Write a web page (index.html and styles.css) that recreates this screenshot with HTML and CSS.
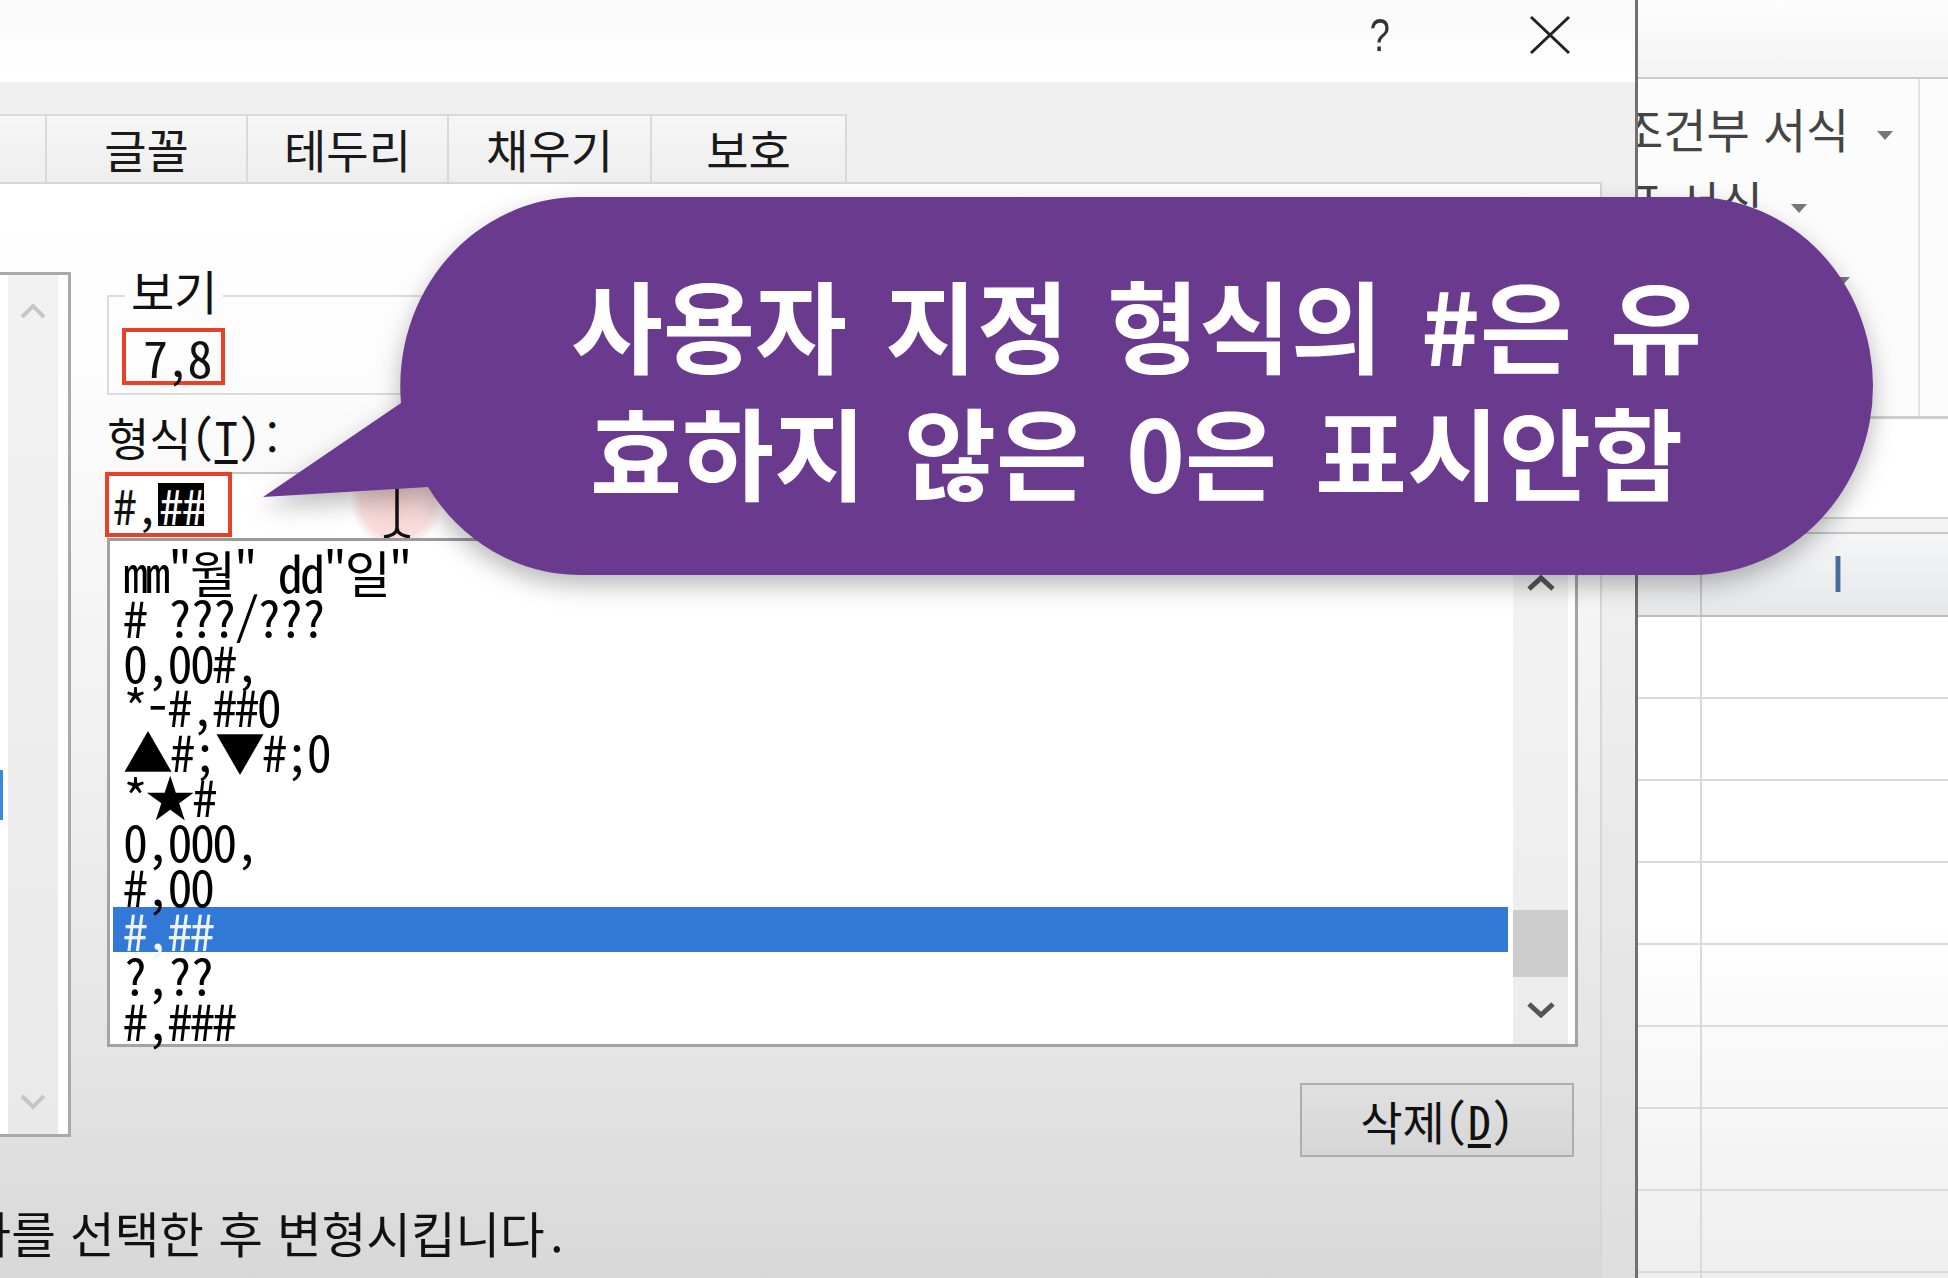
FILE: index.html
```html
<!DOCTYPE html>
<html lang="ko">
<head>
<meta charset="utf-8">
<title>셀 서식</title>
<link rel="stylesheet" href="styles.css">
</head>
<body>
<div class="screen">
  <section class="dialog">
    <header class="titlebar">
      <span class="help">?</span>
      <svg class="close" width="42" height="40" viewBox="0 0 42 40"><path d="M2 2 L40 38 M40 2 L2 38" stroke="#222" stroke-width="3" fill="none"/></svg>
    </header>
    <nav class="tabs">
      <div class="tab t1">맞춤</div>
      <div class="tab t2">글꼴</div>
      <div class="tab t3">테두리</div>
      <div class="tab t4">채우기</div>
      <div class="tab t5">보호</div>
    </nav>
    <div class="panel">
      <div class="panel-body">
        <div class="cat-list">
          <div class="cat-items"><div class="cat-sel"></div></div>
          <div class="cat-scroll">
            <svg class="chev" width="26" height="16" viewBox="0 0 26 16"><polyline points="2,14 13,3 24,14" fill="none" stroke="#c6c6c6" stroke-width="4"/></svg>
            <svg class="chev" width="26" height="16" viewBox="0 0 26 16"><polyline points="2,2 13,13 24,2" fill="none" stroke="#c6c6c6" stroke-width="4"/></svg>
          </div>
        </div>
        <div class="main-col">
          <fieldset class="preview">
            <legend>보기</legend>
            <div class="redbox sample">7,8</div>
          </fieldset>
          <div class="fmt-label">형식(<u>T</u>):</div>
          <div class="fmt-input">
            <div class="glow-clip"><span class="glow"></span></div>
            <div class="redbox code">#,<span class="hl">##</span></div>
            <svg class="ibeam" width="30" height="50" viewBox="0 0 30 50"><path d="M15 0 V42 M2 49 Q15 47 15 40 Q15 47 28 49" fill="none" stroke="#111" stroke-width="3.5"/></svg>
          </div>
          <div class="fmt-list">
            <ul class="items">
              <li>mm"월" dd"일"</li>
              <li># ???/???</li>
              <li>0,00#,</li>
              <li>*-#,##0</li>
              <li>▲#;▼#;0</li>
              <li>*★#</li>
              <li>0,000,</li>
              <li>#,00</li>
              <li class="selected">#,##</li>
              <li>?,??</li>
              <li>#,###</li>
            </ul>
            <div class="vscroll">
              <div class="arrow-box"><svg width="28" height="16" viewBox="0 0 28 16"><polyline points="2,14 14,3 26,14" fill="none" stroke="#555" stroke-width="5"/></svg></div>
              <div class="thumb"></div>
              <div class="arrow-box down"><svg width="28" height="16" viewBox="0 0 28 16"><polyline points="2,2 14,13 26,2" fill="none" stroke="#555" stroke-width="5"/></svg></div>
            </div>
          </div>
          <div class="btn-row"><button class="btn">삭제(<u>D</u>)</button></div>
        </div>
      </div>
      <div class="hint-row"><span>기존 형식 중 하나를 선택한 후 변형시킵니다.</span></div>
    </div>
  </section>

  <section class="excel">
    <div class="xl-top"></div>
    <div class="ribbon">
      <div class="styles-group">
        <div class="rb-item">조건부 서식<i class="dd"></i></div>
        <div class="rb-item">표 서식<i class="dd"></i></div>
        <div class="rb-item">셀 스타일<i class="dd"></i></div>
      </div>
    </div>
    <div class="formula"></div>
    <div class="gapbar"></div>
    <div class="colhead"><div class="hc"></div><div class="ic">I</div></div>
    <div class="grid">
      <div class="row"><div class="hc"></div><div class="ic"></div></div>
      <div class="row"><div class="hc"></div><div class="ic"></div></div>
      <div class="row"><div class="hc"></div><div class="ic"></div></div>
      <div class="row"><div class="hc"></div><div class="ic"></div></div>
      <div class="row"><div class="hc"></div><div class="ic"></div></div>
      <div class="row"><div class="hc"></div><div class="ic"></div></div>
      <div class="row"><div class="hc"></div><div class="ic"></div></div>
      <div class="row"><div class="hc"></div><div class="ic"></div></div>
      <div class="row"><div class="hc"></div><div class="ic"></div></div>
    </div>
  </section>
</div>

<svg class="bubble" width="1948" height="1278" viewBox="0 0 1948 1278">
  <path d="M580 197 H1693 A180 189 0 0 1 1873 386 A180 189 0 0 1 1693 575 H580 A180 189 0 0 1 428 487 L263 497 L401 403 A180 189 0 0 1 580 197 Z" fill="#6a3a8f"/>
</svg>
<div class="bubble-text">
  <p>사용자 지정 형식의 #은 유</p>
  <p>효하지 않은 0은 표시안함</p>
</div>
</body>
</html>
```

FILE: styles.css
```css
html, body {
  margin: 0;
  padding: 0;
}

body {
  width: 1948px;
  height: 1278px;
  overflow: hidden;
  position: relative;
  background: #ffffff;
  font-family: "Noto Sans Mono CJK KR", "Noto Sans CJK KR", monospace;
  color: #111;
}

.screen {
  display: flex;
  width: 1948px;
  height: 1278px;
}

/* ---------- dialog ---------- */
.dialog {
  flex: 0 0 1638px;
  box-sizing: border-box;
  border-right: 3px solid #707070;
  background: linear-gradient(to bottom, #f0f0f0 0%, #f0f0f0 45%, #dedede 100%);
  display: flex;
  flex-direction: column;
  overflow: hidden;
}

.titlebar {
  height: 82px;
  flex: 0 0 82px;
  box-sizing: border-box;
  display: flex;
  justify-content: flex-end;
  align-items: flex-start;
  padding-right: 64px;
  background: linear-gradient(to bottom, #f9f9f9, #ffffff);
}

.help {
  font-family: "Liberation Sans", sans-serif;
  font-size: 46px;
  line-height: 50px;
  color: #333;
  margin-top: 10px;
  margin-right: 136px;
  transform: scaleX(0.8);
}

.close {
  margin-top: 15px;
}

.tabs {
  display: flex;
  height: 68px;
  flex: 0 0 68px;
  margin: 32px 0 0 -155px;
}

.tab {
  box-sizing: border-box;
  border: 2px solid #d9d9d9;
  border-bottom: none;
  border-right: none;
  background: linear-gradient(to bottom, #f6f6f6, #eeeeee);
  font-family: "Noto Sans CJK KR", sans-serif;
  font-size: 46px;
  line-height: 64px;
  text-align: center;
  color: #1a1a1a;
}

.t1 { width: 200px; }
.t2 { width: 201px; }
.t3 { width: 201px; }
.t4 { width: 203px; }
.t5 { width: 197px; border-right: 2px solid #d9d9d9; }

.panel {
  flex: 1;
  margin: 0 33px 0 -40px;
  border: 2px solid #d6d6d6;
  border-bottom: none;
  background: linear-gradient(to bottom, #ffffff 0%, #fcfcfc 18%, #f1f1f1 50%, #e4e4e4 80%, #d8d8d8 100%);
}

.panel-body {
  display: flex;
  align-items: flex-start;
  padding-top: 88px;
}

/* category list (left, mostly off-screen) */
.cat-list {
  margin-left: 8px;
  width: 101px;
  height: 865px;
  box-sizing: border-box;
  border: 3px solid #a9a9a9;
  background: #ffffff;
  display: flex;
}

.cat-items {
  flex: 1;
}

.cat-sel {
  margin-top: 495px;
  width: 30px;
  height: 50px;
  background: #3b86e0;
}

.cat-scroll {
  width: 50px;
  margin-right: 10px;
  background: linear-gradient(to bottom, #f2f2f2, #e9e9e9);
  display: flex;
  flex-direction: column;
  justify-content: space-between;
  align-items: center;
  box-sizing: border-box;
  padding: 28px 0 24px;
}

/* main column */
.main-col {
  margin-left: 36px;
  width: 1471px;
  display: flex;
  flex-direction: column;
}

.preview {
  margin: -5px 0 0;
  padding: 4px 13px 8px;
  border: 2px solid #dcdcdc;
  min-inline-size: 0;
}

.preview legend {
  font-size: 47px;
  line-height: 45px;
  padding: 0 6px 12px;
  margin-left: 3px;
}

.redbox {
  box-sizing: border-box;
  border: 4px solid #e94027;
}

.sample {
  width: 103px;
  height: 57px;
  font-size: 50px;
  letter-spacing: -2.7px;
  line-height: 49px;
  padding-left: 17px;
}

.fmt-label {
  margin-top: 16px;
  font-size: 46px;
  line-height: 50px;
}

.fmt-label u {
  text-underline-offset: 4px;
}

.fmt-input {
  position: relative;
  margin-top: 11px;
  height: 66px;
  box-sizing: border-box;
  border: 2px solid #c6c6c6;
  border-bottom: none;
  background: #ffffff;
  display: flex;
  align-items: flex-start;
}

.glow-clip {
  position: absolute;
  inset: 0;
  overflow: hidden;
}

.glow {
  position: absolute;
  left: 242px;
  top: -18px;
  width: 92px;
  height: 92px;
  border-radius: 50%;
  background: radial-gradient(circle, rgba(238, 170, 170, 0.55) 0%, rgba(238, 170, 170, 0.4) 55%, rgba(238, 170, 170, 0) 72%);
}

.code {
  position: relative;
  margin: -2px 0 0 -4px;
  width: 127px;
  height: 65px;
  padding-left: 4px;
  display: flex;
  align-items: center;
  font-size: 48px;
  letter-spacing: -1.7px;
  line-height: 43px;
  white-space: pre;
}

.hl {
  display: inline-block;
  height: 43px;
  line-height: 43px;
  padding-left: 2px;
  background: #000;
  color: #fff;
}

.ibeam {
  position: absolute;
  left: 273px;
  top: 14px;
}

.fmt-list {
  height: 509px;
  box-sizing: border-box;
  border: 3px solid #a3a3a3;
  border-top-color: #9a9a9a;
  background: #ffffff;
  display: flex;
}

.items {
  list-style: none;
  margin: 0;
  padding: 8px 5px 0 3px;
  flex: 1;
}

.items li {
  height: 44.8px;
  line-height: 44.8px;
  padding-left: 10px;
  font-size: 50px;
  letter-spacing: -2.7px;
  white-space: pre;
  color: #000;
}

.items li.selected {
  background: #3278d6;
  color: #eef4ff;
}

.vscroll {
  width: 55px;
  margin-right: 7px;
  background: linear-gradient(to bottom, #f3f3f3, #ececec);
  display: flex;
  flex-direction: column;
  padding-top: 22px;
}

.arrow-box {
  height: 40px;
  display: flex;
  align-items: center;
  justify-content: center;
}

.arrow-box.down {
  margin-top: 13px;
}

.thumb {
  margin-top: 307px;
  height: 67px;
  background: #cdcdcd;
}

.btn-row {
  margin-top: 36px;
  display: flex;
  justify-content: flex-end;
  padding-right: 4px;
}

.btn {
  width: 274px;
  height: 74px;
  box-sizing: border-box;
  border: 2px solid #adadad;
  background: linear-gradient(to bottom, #e0e0e0, #d6d6d6);
  font-family: "Noto Sans Mono CJK KR", "Noto Sans CJK KR", monospace;
  font-size: 46px;
  color: #111;
  padding: 0;
}

.btn u {
  text-underline-offset: 4px;
}

.hint-row {
  margin-top: 50px;
  width: 607px;
  display: flex;
  justify-content: flex-end;
}

.hint-row span {
  flex: none;
  white-space: nowrap;
  font-size: 48.5px;
  word-spacing: -10px;
  line-height: 50px;
  color: #111;
}

/* ---------- excel background ---------- */
.excel {
  flex: 1 1 auto;
  min-width: 0;
  overflow: hidden;
  display: flex;
  flex-direction: column;
  background: #ffffff;
}

.xl-top {
  flex: 0 0 77px;
  border-bottom: 2px solid #cbcbcb;
  background: linear-gradient(to bottom, #fdfdfd, #f3f3f3);
}

.ribbon {
  flex: 0 0 337px;
  border-bottom: 3px solid #cfcfcf;
  background: #fcfcfc;
  display: flex;
}

.styles-group {
  margin-left: -21px;
  width: 303px;
  flex: none;
  box-sizing: border-box;
  border-right: 2px solid #e2e2e2;
  padding: 12px 0 0 3px;
}

.rb-item {
  height: 73px;
  line-height: 73px;
  font-family: "Noto Sans CJK KR", sans-serif;
  font-size: 47px;
  color: #454545;
  white-space: nowrap;
}

.dd {
  display: inline-block;
  vertical-align: middle;
  margin-left: 28px;
  width: 0;
  height: 0;
  border-left: 8px solid transparent;
  border-right: 8px solid transparent;
  border-top: 9px solid #777;
}

.formula {
  flex: 0 0 98px;
  border-bottom: 2px solid #d4d4d4;
  background: #ffffff;
}

.gapbar {
  flex: 0 0 13px;
  border-bottom: 2px solid #c6c6c6;
  background: #f4f4f4;
}

.colhead {
  flex: 0 0 81px;
  display: flex;
  border-bottom: 2px solid #bdbdbd;
  background: linear-gradient(to bottom, #f5f6f7, #e5e7ea);
}

.colhead .hc {
  flex: 0 0 62px;
  border-right: 2px solid #c6c6c6;
}

.colhead .ic {
  flex: 0 0 272px;
  text-align: center;
  font-family: "Liberation Sans", sans-serif;
  font-size: 52px;
  line-height: 81px;
  color: #4a6a9c;
}

.grid {
  flex: 1;
  background: linear-gradient(to bottom, #ffffff 0%, #ffffff 40%, #ebebeb 100%);
}

.row {
  display: flex;
  height: 80px;
  border-bottom: 2px solid #dadada;
}

.row .hc {
  flex: 0 0 62px;
  border-right: 2px solid #dadada;
}

.row .ic {
  flex: 0 0 272px;
}

/* ---------- callout bubble ---------- */
.bubble {
  position: absolute;
  left: 0;
  top: 0;
  z-index: 10;
  pointer-events: none;
  filter: drop-shadow(0 10px 12px rgba(0, 0, 0, 0.28));
}

.bubble-text {
  position: absolute;
  left: 400px;
  top: 197px;
  width: 1473px;
  height: 378px;
  z-index: 11;
  box-sizing: border-box;
  display: flex;
  flex-direction: column;
  justify-content: center;
  align-items: center;
  font-family: "Noto Sans CJK KR", sans-serif;
  font-weight: 700;
  font-size: 100px;
  line-height: 127px;
  word-spacing: 10px;
  color: #ffffff;
}

.bubble-text p {
  margin: 0;
  white-space: nowrap;
}
```
